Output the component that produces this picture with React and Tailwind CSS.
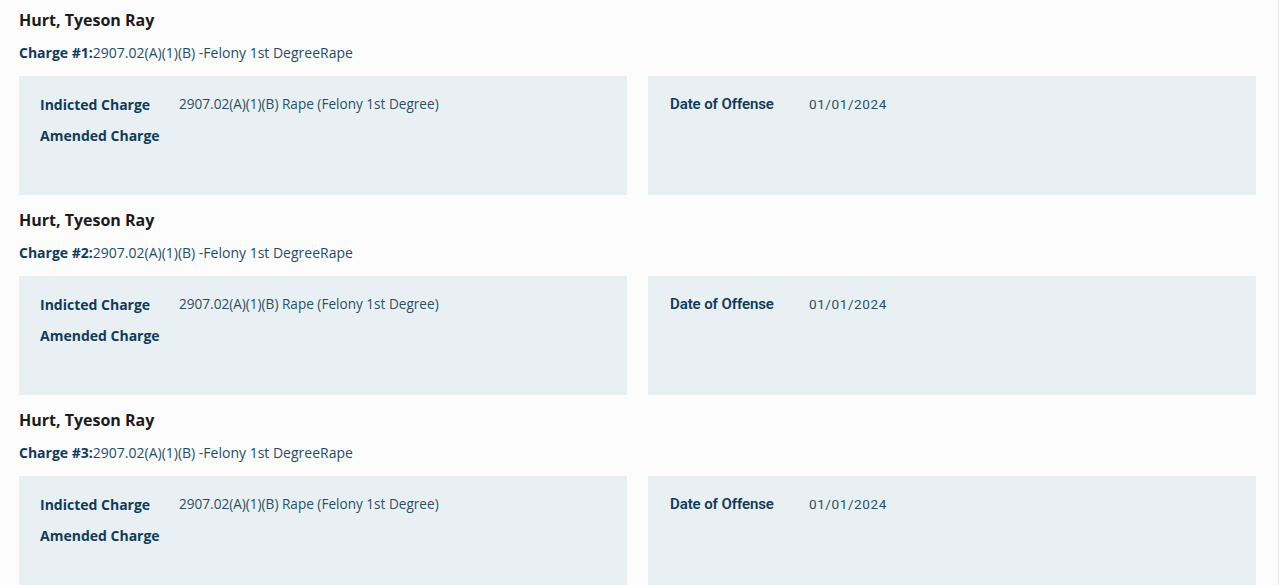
const charges = [1, 2, 3].map((n) => ({
  id: n,
  defendant: 'Hurt, Tyeson Ray',
  statute: '2907.02(A)(1)(B)',
  level: 'Felony 1st Degree',
  offense: 'Rape',
  indicted: '2907.02(A)(1)(B) Rape (Felony 1st Degree)',
  amended: '',
  offenseDate: '01/01/2024',
}));

const leftFont = { fontFamily: '"Open Sans", Lato, sans-serif' };
const rightFont = { fontFamily: 'Roboto, "Liberation Sans", sans-serif' };

function ChargeBlock({ charge }) {
  return (
    <section className="h-[200px]">
      <h2 className="pt-[10px] text-[16px] font-bold leading-[20px] text-[#1b1b1b]" style={leftFont}>
        {charge.defendant}
      </h2>
      <p className="mt-[14px] text-[14px] leading-[18px] text-[#1f4d6b]" style={leftFont}>
        <span className="font-bold text-[#0f3b5c]">Charge #{charge.id}:</span>
        {charge.statute} -{charge.level}
        {charge.offense}
      </p>
      <div className="mt-[14px] grid grid-cols-2 gap-[21px]">
        <div className="h-[119px] bg-[#e9f0f3] px-[21px] pt-[19px]" style={leftFont}>
          <div className="flex h-[19px] items-center text-[14px]">
            <span className="w-[139px] font-bold text-[#0f3b5c]">Indicted Charge</span>
            <span className="text-[13.6px] text-[#2b4f66]">{charge.indicted}</span>
          </div>
          <div className="mt-[12px] flex h-[19px] items-center text-[14px]">
            <span className="w-[139px] font-bold text-[#0f3b5c]">Amended Charge</span>
            <span className="text-[13.6px] text-[#2b4f66]">{charge.amended}</span>
          </div>
        </div>
        <div className="h-[119px] bg-[#e9f0f3] px-[22px] pt-[19px]" style={rightFont}>
          <div className="flex h-[19px] items-center">
            <span className="w-[139px] text-[15px] font-semibold tracking-[-0.1px] text-[#0f3b5c]">
              Date of Offense
            </span>
            <span className="text-[13.5px] tracking-[0.6px] text-[#2b4f66]">{charge.offenseDate}</span>
          </div>
        </div>
      </div>
    </section>
  );
}

export default function App() {
  return (
    <div className="h-[585px] overflow-hidden border-r border-[#e6e6e6] bg-[#fcfcfc]">
      <div className="w-[1256px] pl-[19px]">
        {charges.map((c) => (
          <ChargeBlock key={c.id} charge={c} />
        ))}
      </div>
    </div>
  );
}
